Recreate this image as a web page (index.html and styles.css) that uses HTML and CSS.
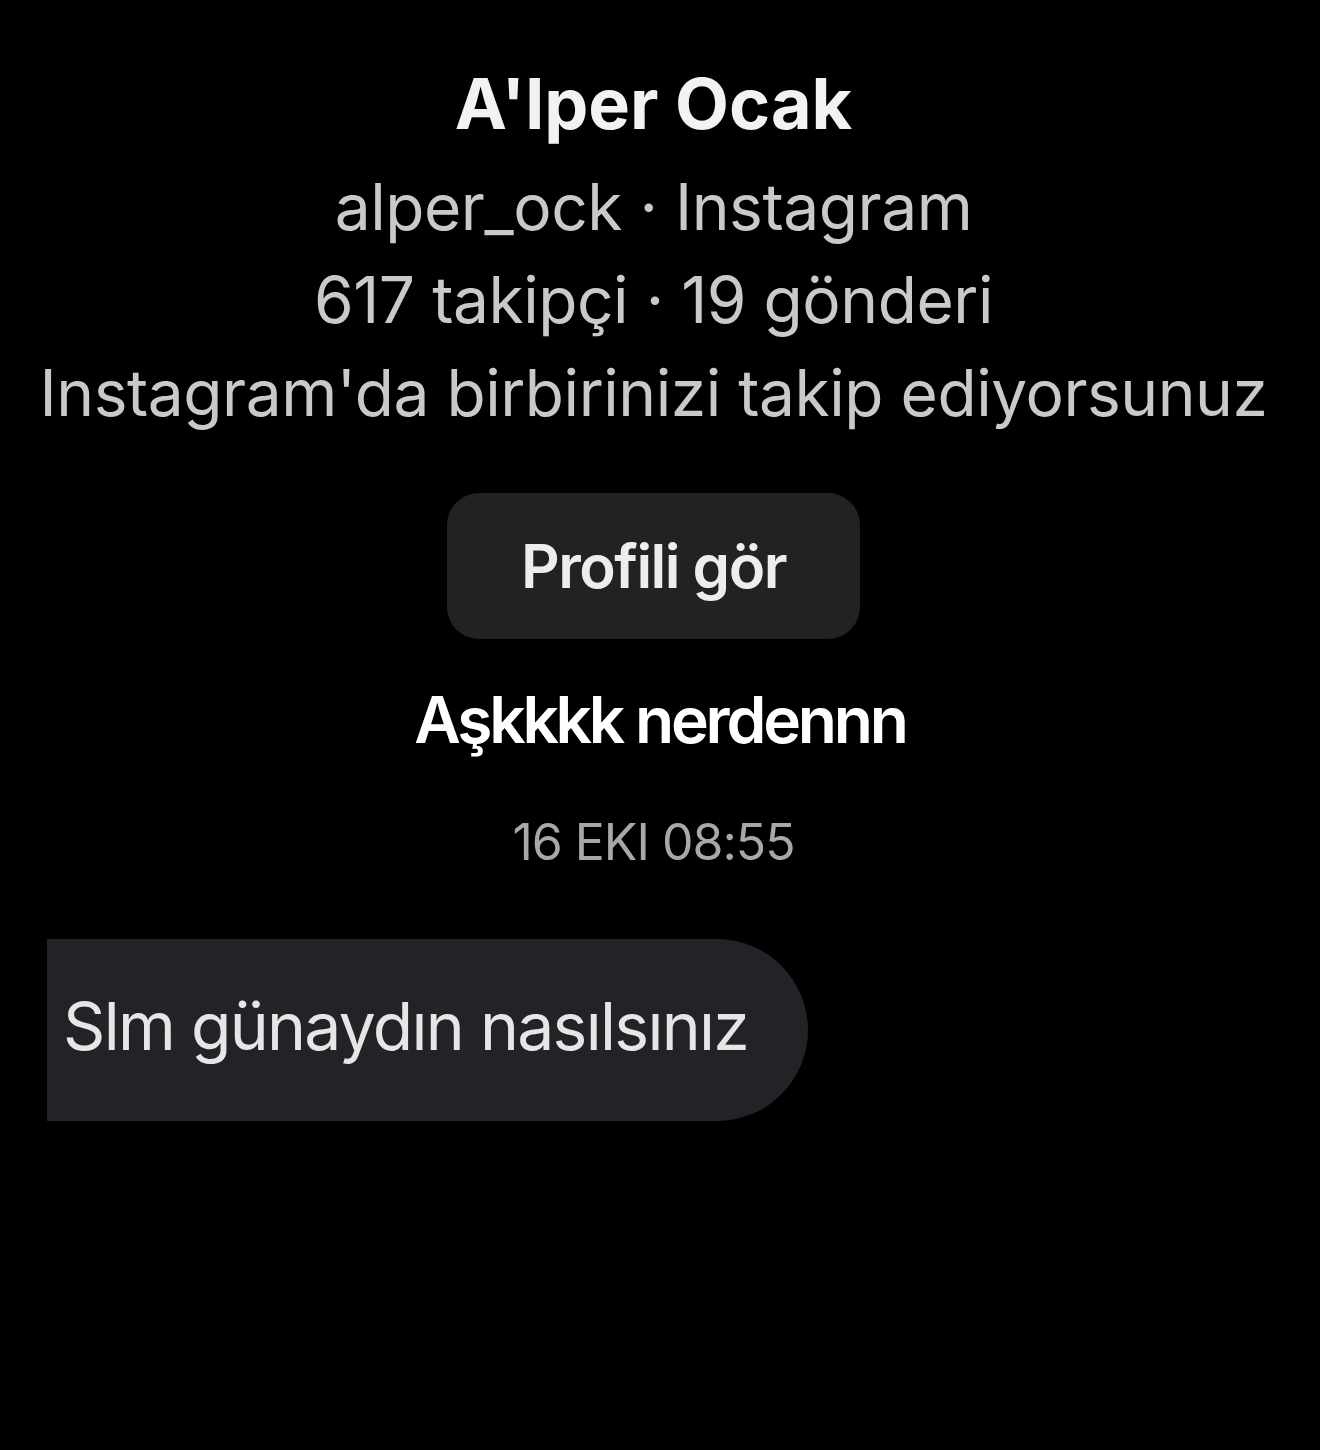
FILE: index.html
```html
<!DOCTYPE html>
<html lang="tr">
<head>
<meta charset="utf-8">
<title>A'lper Ocak</title>
<link rel="stylesheet" href="styles.css">
</head>
<body>
<main class="chat">
  <header class="profile">
    <h1 class="name">A'lper Ocak</h1>
    <p class="meta">alper_ock · Instagram</p>
    <p class="meta">617 takipçi · 19 gönderi</p>
    <p class="meta">Instagram'da birbirinizi takip ediyorsunuz</p>
    <button class="profile-btn">Profili gör</button>
  </header>
  <p class="caption">Aşkkkk nerdennn</p>
  <p class="timestamp">16 EKI 08:55</p>
  <div class="bubble">Slm günaydın nasılsınız</div>
</main>
</body>
</html>
```
FILE: styles.css
```css
html, body {
  margin: 0;
  padding: 0;
  background: #000;
}
body {
  width: 1320px;
  height: 1450px;
  overflow: hidden;
  font-family: Inter, "Liberation Sans", Arial, sans-serif;
}
.chat {
  display: flex;
  flex-direction: column;
  align-items: center;
}
.profile {
  display: flex;
  flex-direction: column;
  align-items: center;
  padding: 64px 13px 0 0;
}
.name {
  margin: 0 0 16px;
  font-size: 70px;
  line-height: 80px;
  font-weight: 700;
  color: #f2f2f2;
}
.meta {
  margin: 0;
  font-size: 64px;
  line-height: 93px;
  letter-spacing: -0.45px;
  color: #c9c9c9;
}
.profile-btn {
  margin-top: 54px;
  width: 413px;
  height: 146px;
  border: none;
  border-radius: 32px;
  background: #222124;
  color: #ededed;
  font-family: inherit;
  font-size: 60px;
  font-weight: 600;
  letter-spacing: -1.5px;
}
.caption {
  margin: 41px 0 0;
  font-size: 64px;
  line-height: 80px;
  font-weight: 600;
  letter-spacing: -3.2px;
  color: #fff;
}
.timestamp {
  margin: 52px 13px 0 0;
  font-size: 50px;
  line-height: 60px;
  letter-spacing: -1px;
  color: #a8a8a8;
}
.bubble {
  align-self: flex-start;
  margin: 67px 0 0 47px;
  width: 761px;
  height: 182px;
  box-sizing: border-box;
  padding: 0 0 8px 16px;
  display: flex;
  align-items: center;
  white-space: nowrap;
  background: #232226;
  border-radius: 0 91px 91px 0;
  color: #e6e6e6;
  font-size: 66px;
  letter-spacing: -1.7px;
}
```
